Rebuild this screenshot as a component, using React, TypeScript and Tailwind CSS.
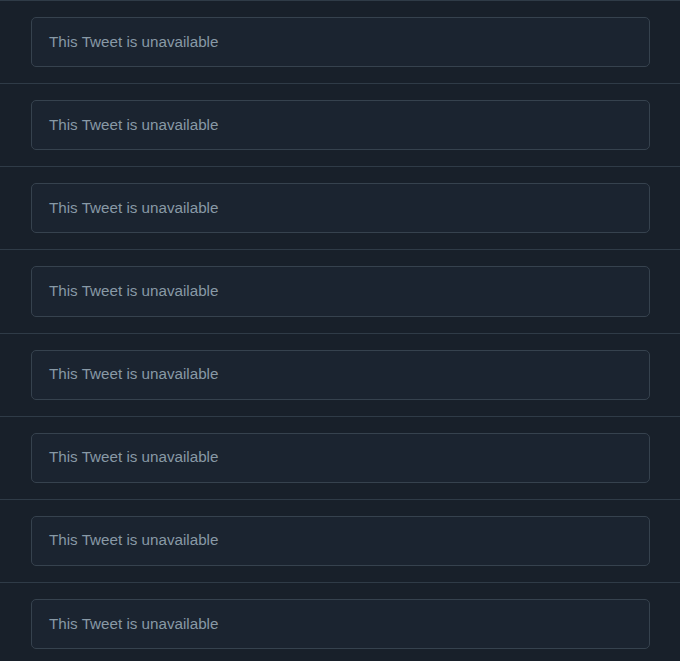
import React from "react";

const rows = Array.from({ length: 8 }, (_, i) => i);

const UnavailableTweet: React.FC = () => (
  <div className="border-t border-[#2f3b47] pt-4 pb-4 pl-[31px] pr-[30px]">
    <div className="flex h-[50.14px] items-center rounded-[5px] border border-[#36424e] bg-[#1b2430] pl-[17px]">
      <span className="text-[15.2px] text-[#8899a6]">This Tweet is unavailable</span>
    </div>
  </div>
);

export default function App() {
  return (
    <div
      className="h-[661px] w-[680px] overflow-hidden bg-[#18202a]"
      style={{ fontFamily: '"Liberation Sans", Arial, sans-serif' }}
    >
      {rows.map((i) => (
        <UnavailableTweet key={i} />
      ))}
    </div>
  );
}
